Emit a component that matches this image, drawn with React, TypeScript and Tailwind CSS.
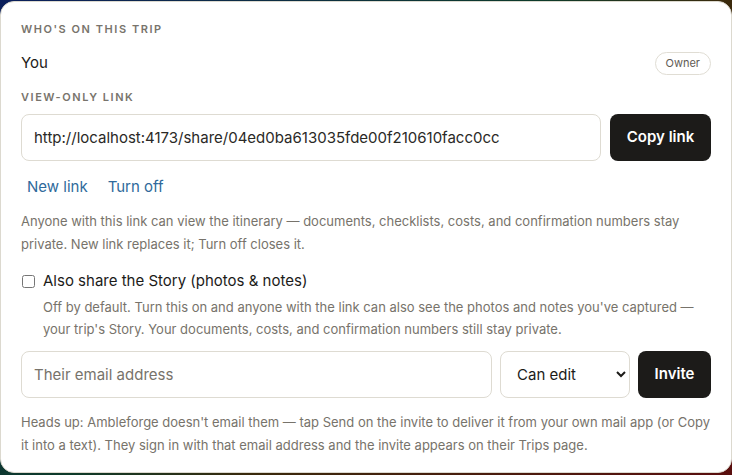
import { useState } from 'react';

export default function App() {
  const [shareStory, setShareStory] = useState(false);
  const [email, setEmail] = useState('');
  const [role, setRole] = useState('edit');
  const shareUrl = 'http://localhost:4173/share/04ed0ba613035fde00f210610facc0cc';

  return (
    <div
      className="h-[475px] w-[732px] overflow-hidden bg-[linear-gradient(135deg,#0b1f5c_0%,#0d3b2a_45%,#3a2a0c_60%,#5a0e0e_100%)] pt-px"
      style={{ fontFamily: 'Inter, "Noto Sans", sans-serif' }}
    >
      <div className="h-[472px] w-[732px] rounded-[14px] border border-[#dcd9cf] bg-white px-5 pt-[18px] text-[#1c1b19]">
        <h3 className="text-[11px] leading-[18px] font-semibold tracking-[0.14em] text-[#78746c] uppercase">
          Who's on this trip
        </h3>

        <div className="mt-[14px] flex h-[23px] items-center justify-between">
          <span className="text-[15px]">You</span>
          <span className="flex h-[23px] items-center rounded-full border border-[#e0ddd4] px-[10px] text-[11px] text-[#5f5b54]">
            Owner
          </span>
        </div>

        <h3 className="mt-[13px] text-[11px] leading-[18px] font-semibold tracking-[0.14em] text-[#78746c] uppercase">
          View-only link
        </h3>

        <div className="mt-2 flex gap-[9px]">
          <input
            readOnly
            value={shareUrl}
            className="h-[47px] flex-1 rounded-lg border border-[#dedbd2] px-3 text-[15px] text-[#2a2926] outline-none"
          />
          <button className="h-[47px] w-[101px] rounded-lg bg-[#1c1b19] text-[15px] font-semibold text-white">
            Copy link
          </button>
        </div>

        <div className="mt-[16px] flex gap-5 pl-[6px] text-[15px] leading-5 text-[#2f6a9b]">
          <button>New link</button>
          <button>Turn off</button>
        </div>

        <p className="mt-[13px] text-[13px] leading-[23px] text-[#77736b]">
          Anyone with this link can view the itinerary — documents, checklists, costs, and confirmation numbers stay
          private. New link replaces it; Turn off closes it.
        </p>

        <label className="mt-[14px] flex items-center gap-[8px] pl-px text-[15px] leading-[22px]">
          <input
            type="checkbox"
            checked={shareStory}
            onChange={(e) => setShareStory(e.target.checked)}
            className="m-0 h-[13px] w-[13px]"
          />
          Also share the Story (photos &amp; notes)
        </label>
        <p className="mt-1 pl-[22px] text-[13px] leading-[22px] text-[#77736b]">
          Off by default. Turn this on and anyone with the link can also see the photos and notes you've captured —
          your trip's Story. Your documents, costs, and confirmation numbers still stay private.
        </p>

        <div className="mt-[11px] flex gap-[8px]">
          <input
            type="email"
            value={email}
            onChange={(e) => setEmail(e.target.value)}
            placeholder="Their email address"
            className="h-[47px] flex-1 rounded-lg border border-[#dedbd2] px-3 text-[15px] outline-none placeholder:text-[#77736b]"
          />
          <select
            value={role}
            onChange={(e) => setRole(e.target.value)}
            className="h-[47px] w-[130px] rounded-lg border border-[#dedbd2] bg-white px-3 text-[15px] text-[#1c1b19]"
          >
            <option value="edit">Can edit</option>
            <option value="view">Can view</option>
          </select>
          <button className="h-[47px] w-[73px] rounded-lg bg-[#1c1b19] text-[15px] font-semibold text-white">
            Invite
          </button>
        </div>

        <p className="mt-[13px] text-[13px] leading-[23px] text-[#77736b]">
          Heads up: Ambleforge doesn't email them — tap Send on the invite to deliver it from your own mail app (or Copy
          it into a text). They sign in with that email address and the invite appears on their Trips page.
        </p>
      </div>
    </div>
  );
}
